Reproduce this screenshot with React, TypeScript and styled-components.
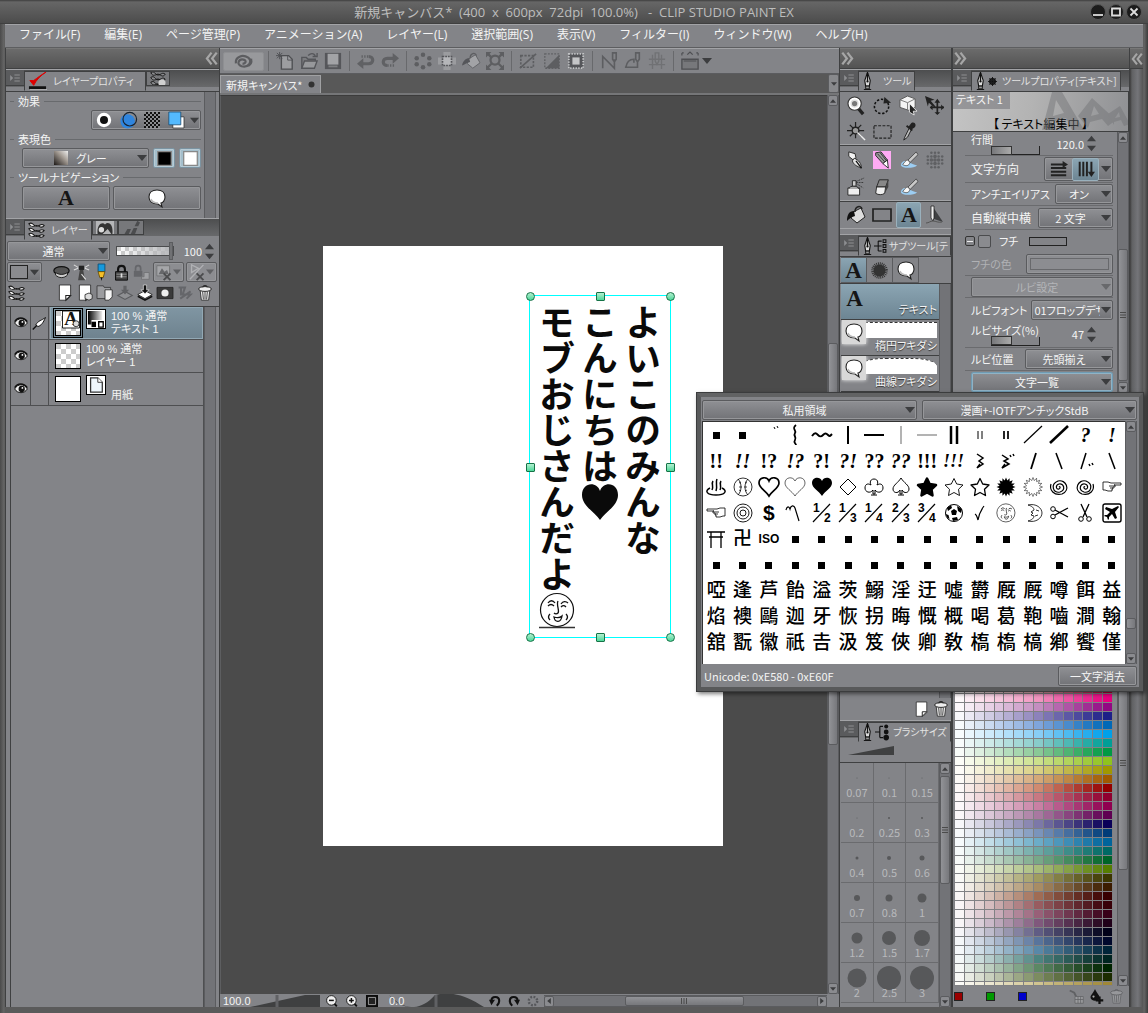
import React from 'react';
import styled, { createGlobalStyle, css } from 'styled-components';

const c = {
  panel: '#838488',
  line: '#4e4f51',
  light: '#a2a3a6',
  dark: '#4b4b4b',
  text: '#f4f4f4',
  dim: '#b8b9bc',
};
const ui = '"Noto Sans CJK JP", "Noto Sans", sans-serif';
const wide = '"Open Sans", "Noto Sans CJK JP", sans-serif';
const compact = '"Liberation Sans", "Noto Sans CJK JP", sans-serif';
const serif = '"Liberation Serif", serif';
const raised = css`
  background: linear-gradient(#8f9094, #727377);
  border: 1px solid #5a5b5e;
  border-radius: 2px;
  box-shadow: inset 0 0 0 1px #96979a;
`;

const Global = createGlobalStyle`
  * { box-sizing: border-box; }
  html, body { margin: 0; background: ${c.dark}; }
  body { font: 11px/14px ${ui}; color: ${c.text}; font-feature-settings: "palt"; overflow: hidden; }
  button, input, select { font: inherit; font-feature-settings: inherit; color: inherit; margin: 0; padding: 0; }
  button { background: none; border: 0; display: flex; align-items: center; justify-content: center; }
  svg { display: block; flex: none; overflow: visible; }
  h2 { margin: 0; font: inherit; }
`;

/* ---------- window ---------- */
const Win = styled.div`
  height: 100vh; min-height: 760px; display: flex; flex-direction: column;
  padding: 0 5px 6px; position: relative;
  background: linear-gradient(90deg, #4a4a4a, #666 4px, #5a5a5a 5px, #5a5a5a calc(100% - 5px), #666 calc(100% - 4px), #3c3c3c);
`;
const TitleBar = styled.header`
  height: 24px; margin: 0 -5px; flex: none; display: flex; align-items: center; justify-content: center;
  background: linear-gradient(#3e3e3e, #666 2px, #4c4c4c 23px, #333);
  color: #bdbdbd; font: 13px/16px ${wide}; position: relative; white-space: pre; font-feature-settings: normal;
`;
const WinButtons = styled.div`
  position: absolute; right: 6px; top: 4px; display: flex; gap: 2px;
`;
const MenuBar = styled.nav`
  height: 24px; flex: none; display: flex; align-items: center; gap: 24px; padding: 0 14px 2px;
  background: linear-gradient(#a2a3a6 1px, ${c.panel} 1px); border-bottom: 1px solid #5d5e60;
  font: 12px/16px ${wide}; font-feature-settings: normal;
  button { white-space: nowrap; }
`;
const Body = styled.div` flex: 1; min-height: 0; display: flex; `;
const Column = styled.section<{ $w: number }>`
  width: ${p => p.$w}px; flex: none; display: flex; flex-direction: column; min-height: 0;
  background: ${c.panel}; border-left: 1px solid #3f4041; border-right: 1px solid #3f4041;
`;
const Strip = styled.div<{ $end?: boolean }>`
  height: 21px; flex: none; display: flex; align-items: center; padding: 0 1px;
  justify-content: ${p => (p.$end ? 'flex-end' : 'flex-start')};
  background: linear-gradient(#6b6b6b, #535353); border-bottom: 1px solid #3f4041; border-top: 1px solid #777;
`;
const Edge = styled.aside`
  width: 13px; flex: none; display: flex; flex-direction: column;
  background: linear-gradient(90deg, #3e3e3e, #606163 2px, #747579 60%, #555);
`;

/* ---------- panels ---------- */
const Panel = styled.section<{ $grow?: boolean; $h?: number }>`
  display: flex; flex-direction: column; min-height: 0; overflow: hidden;
  flex: ${p => (p.$grow ? '1 1 0' : 'none')};
  ${p => p.$h && `height: ${p.$h}px;`}
`;
const Tabs = styled.div`
  height: 22px; flex: none; display: flex; align-items: flex-start; border-top: 1px solid ${c.light};
  background: linear-gradient(#4d4e4f, #68696b) 0 0 / 100% 17px no-repeat, ${c.panel};
`;
const TabMenu = styled.button`
  width: 18px; height: 16px; flex: none; background: #5a5b5d; border-bottom: 1px solid #3f4041;
`;
const Tab = styled.button<{ $on?: boolean; $gap?: number }>`
  height: ${p => (p.$on ? 20 : 15)}px; margin-top: 1px; padding: 0 3px; gap: ${p => p.$gap ?? 4}px; white-space: nowrap;
  justify-content: flex-start; min-width: 0; overflow: hidden; font-size: 10px;
  background: ${p => (p.$on ? c.panel : '#77787b')}; color: #e2e2e2;
  border: 1px solid #3f4041; border-bottom-color: ${p => (p.$on ? c.panel : '#3f4041')};
`;
const Split = styled.div` flex: 1; min-height: 0; display: flex; border-top: 1px solid #3f4041; padding-left: 1px; `;
const Main = styled.div<{ $pad?: string }>`
  flex: 1; min-width: 0; display: flex; flex-direction: column; overflow: hidden; padding: ${p => p.$pad || '0'};
`;
const Gap = styled.i<{ $w?: number }>` width: ${p => p.$w || 4}px; flex: none; `;
const Heading = styled.h2`
  height: 18px; flex: none; display: flex; align-items: center; gap: 4px; margin-left: -12px; white-space: nowrap;
  &::before, &::after { content: ''; height: 1px; background: ${c.line}; opacity: .5; width: 4px; }
  &::after { flex: 1; }
`;
const Row = styled.div<{ $h?: number; $gap?: number; $end?: boolean; $between?: boolean; $grow?: boolean; $pad?: string }>`
  display: flex; flex: ${p => (p.$grow ? '1' : 'none')}; align-items: center; height: ${p => p.$h || 20}px; gap: ${p => p.$gap || 0}px;
  justify-content: ${p => (p.$end ? 'flex-end' : p.$between ? 'space-between' : 'flex-start')}; padding: ${p => p.$pad || '0'};
`;
const Group = styled.div` ${raised} height: 20px; display: flex; align-items: center; `;
const Btn = styled.button<{ $w?: number; $h?: number; $blue?: boolean; $off?: boolean; $grow?: boolean }>`
  ${raised}
  width: ${p => (p.$w ? p.$w + 'px' : 'auto')}; height: ${p => p.$h || 20}px; ${p => p.$grow && 'flex: 1;'}
  ${p => p.$blue && 'background: #a4bfcc; border-color: #7b93a1; box-shadow: inset 0 0 0 1px #b8ccd6;'}
  ${p => p.$off && 'background: #8c8d91; color: #b4b5b8;'}
`;
const IconBtn = styled.button<{ $w?: number; $h?: number; $on?: boolean }>`
  width: ${p => p.$w || 20}px; height: ${p => p.$h || 20}px; flex: none;
  ${p => p.$on && `background: linear-gradient(#8ba5b3, #6d8593); border: 1px solid #9ab1bd; border-radius: 2px;`}
`;

const Drop = styled.div<{ $w?: number; $h?: number; $off?: boolean; $hot?: boolean }>`
  ${raised}
  display: grid; grid-template-columns: minmax(0, 1fr); align-items: center; height: ${p => p.$h || 20}px;
  flex: ${p => (p.$w ? 'none' : '1')}; min-width: 0;
  ${p => p.$w && `width: ${p.$w}px;`}
  ${p => p.$off && 'background: #8c8d91; color: #b4b5b8;'}
  ${p => p.$hot && 'border-color: #6f9bb3; box-shadow: inset 0 0 0 1px #8fb3c6;'}
  & > * { grid-area: 1 / 1; min-width: 0; }
  & > svg { pointer-events: none; justify-self: end; margin-right: 1px; }
  & > i { pointer-events: none; }
`;
const Select = styled.select<{ $l?: number }>`
  appearance: none; border: 0; background: none; width: 100%; height: 100%; padding: 0 12px 0 ${p => p.$l ?? 2}px;
  text-align: center; text-align-last: center; overflow: hidden; outline: 0;
`;
const Swatch = styled.i`
  width: 14px; height: 14px; margin-left: 31px; background: linear-gradient(45deg, #1c1816, #a59d95 60%, #eee);
`;

/* ---------- scrollbars ---------- */
const BarBox = styled.div<{ $x?: boolean }>`
  flex: none; display: flex; flex-direction: ${p => (p.$x ? 'row' : 'column')};
  ${p => (p.$x ? 'height: 12px; flex: 1;' : 'width: 12px;')} background: #727377; border: 0 solid #5b5c5f;
  border-width: ${p => (p.$x ? '1px 0' : '0 1px')};
`;
const BarBtn = styled.button`
  flex: none; width: 10px; height: 11px; background: #8a8b8f; border: 1px solid #5b5c5f; border-radius: 2px;
`;
const BarTrack = styled.div<{ $x?: boolean; $f: string }>`
  flex: 1; min-height: 0; display: grid; ${p => (p.$x ? `grid-template-columns: ${p.$f};` : `grid-template-rows: ${p.$f};`)}
`;
const Thumb = styled.div<{ $x?: boolean }>`
  ${p => (p.$x ? 'grid-column: 2;' : 'grid-row: 2;')} border: 1px solid #5b5c5f; border-radius: 2px;
  background: linear-gradient(${p => (p.$x ? '180deg' : '90deg')}, #929397, #77787c);
  display: flex; align-items: center; justify-content: center;
`;
const Arrow = ({ d, w = 6, color = '#3c3d3f' }: { d: 'u' | 'd' | 'l' | 'r'; w?: number; color?: string }) => {
  const p = { u: '0,8 10,8 5,2', d: '0,2 10,2 5,8', l: '8,0 8,10 2,5', r: '2,0 2,10 8,5' }[d];
  return <svg width={w} height={w} viewBox="0 0 10 10" fill={color}><polygon points={p} /></svg>;
};
const Scroll = ({ f, x, grip = true }: { f?: [number, number, number]; x?: boolean; grip?: boolean }) => (
  <BarBox $x={x}>
    {f && <BarBtn aria-label={x ? 'Left' : 'Up'}><Arrow d={x ? 'l' : 'u'} /></BarBtn>}
    {f && (
      <BarTrack $x={x} $f={f.map(n => `minmax(0, ${n}fr)`).join(' ')}>
        <Thumb $x={x}>{grip && (
          <svg width="8" height="8" viewBox="0 0 8 8" stroke="#4b4b4b">
            <path d={x ? 'M1.5 1v6M4 1v6M6.5 1v6' : 'M1 1.5h6M1 4h6M1 6.5h6'} />
          </svg>)}
        </Thumb>
      </BarTrack>
    )}
    {f && <BarBtn aria-label={x ? 'Right' : 'Down'}><Arrow d={x ? 'r' : 'd'} /></BarBtn>}
  </BarBox>
);

/* ---------- icons, all on a 20 by 20 field ---------- */
const brush = <><path d="M18 1L9 10l2 3 9-9z" fill="#c9c9c9" stroke="#333" strokeWidth=".8" /><path d="M1 16c0-4 4-6 8-4 4 2 6 3 10 4-3 3-16 4-18 0z" fill="#9ccdf2" /><path d="M9 10c-3 0-4 3-6 5 3 2 7 2 8-2z" fill="#f7f7f7" stroke="#444" strokeWidth=".8" /></>;
const stack = (col: string) => <g fill={col} stroke="#161616" strokeWidth="1.200">{[1, 7, 13].map(y => <path key={y} d={`M1 ${y + 1}c5-3 5 3 9 3s5-4 9-1c-3 5-6 0-9 0s-6 4-9-2z`} />)}</g>;
const trash = (a: string, b: string) => <><path d="M4 7l1.500 12h9L16 7z" fill={a} stroke={b} /><path d="M7 8l1 10M10 8v10M13 8l-1 10" stroke={b} /><ellipse cx="10" cy="5" rx="8" ry="3" fill={a} stroke={b} strokeWidth="1.200" /><path d="M7 3c1-3 5-3 6 0" fill="none" stroke={b} strokeWidth="1.300" /></>;
const balloon = <><path d="M10 2c5 0 8 3 8 7 0 3-2 6-4 6l1 4-4-3c-6 0-9-3-9-7s3-7 8-7z" fill="#fff" stroke="#222" strokeWidth="1.100" /><path d="M4 11c1 3 4 4 7 4" fill="none" stroke="#bbb" strokeWidth="1.500" /></>;
const pageShape = (a: string, b: string) => <><path d="M3 0h14v14l-5 5H3z" fill={a} stroke={b} /><path d="M17 13h-6v6z" fill="#fff" stroke={b} strokeWidth="1.300" /></>;
const letterA = <text x="10" y="17" textAnchor="middle" fontFamily="Liberation Serif, serif" fontWeight="700" fontSize="22" fill="#151515">A</text>;

const icons: Record<string, React.ReactNode> = {
  menu: <><path d="M2 5l5 5-5 5z" fill="#8e8f92" /><path d="M9 5h9M9 10h9M9 15h9" stroke="#8e8f92" strokeWidth="2" /></>,
  left2: <path d="M10 1L3 10l7 9M18 1l-7 9 7 9" fill="none" stroke="#a6a6a6" strokeWidth="3.500" />,
  right2: <path d="M2 1l7 9-7 9M10 1l7 9-7 9" fill="none" stroke="#a6a6a6" strokeWidth="3.500" />,
  check: <><path d="M2 9l4 5c3-6 7-10 13-14-5 3-9 6-13 9z" fill="#d00" stroke="#d00" /><path d="M1 15h18v3H1z" fill="#111" /><path d="M2 19h18" stroke="#eee" /></>,
  stack: stack('#eee'), stackDim: <>{stack('#8a8b8e')}<circle cx="15" cy="15" r="4.500" fill="#d0d0d0" /></>,
  ring: <circle cx="10" cy="10" r="7" fill="#111" stroke="#fff" strokeWidth="4" />,
  blue: <><circle cx="9" cy="11" r="8.500" fill="#2f85de" /><circle cx="11.500" cy="8.500" r="8" fill="none" stroke="#1a2430" strokeWidth="1.400" /></>,
  layerColor: <><path d="M6 6h14v14H6z" fill="#fff" stroke="#333" /><path d="M1 0h15v16H1z" fill="#54baff" stroke="#1c4c72" /></>,
  black: <path d="M2 2h16v16H2z" fill="#000" stroke="#888" strokeWidth="1.500" />,
  white: <path d="M2 2h16v16H2z" fill="#fff" stroke="#888" strokeWidth="1.500" />,
  A: letterA, balloon, brush, trash: trash('#eee', '#222'), trashDim: trash('#97989b', '#626366'),
  page: pageShape('#fff', '#222'),
  pageCube: <>{pageShape('#fff', '#222')}<path d="M10 12l5-2 4 2v5l-4 2-5-2z" fill="#ddd" stroke="#222" /></>,
  folder: <><path d="M0 1h8l1 2h8v14H0z" fill="#9b9c9f" stroke="#333" /><path d="M10 6h9v9l-4 4h-5z" fill="#f4f4f4" stroke="#222" /></>,
  sheetsDim: <><path d="M10 8l9 5-9 5-9-5z" fill="#8f9093" stroke="#5b5c5f" strokeWidth="1.500" /><path d="M8 1h4v5h3l-5 6-5-6h3z" fill="#606164" /></>,
  sheets: <><path d="M10 7l9 5-9 5-9-5z" fill="#fff" stroke="#111" /><path d="M1 14l9 5 9-5" fill="none" stroke="#111" strokeWidth="2" /><path d="M8 0h4v6h3l-5 5-5-5h3z" fill="#111" stroke="#fff" strokeWidth=".7" /></>,
  mask: <><path d="M0 3h20v14H0z" fill="#3a3a3a" stroke="#222" /><circle cx="10" cy="10" r="4.500" fill="#eee" /></>,
  apply: <path d="M5 2v11M2 3h8l-3 9h10l-5 5M4 17l13-9" fill="none" stroke="#65666a" strokeWidth="2.500" />,
  clip: <><ellipse cx="10" cy="8" rx="9" ry="5" fill="#555" stroke="#111" strokeWidth="1.500" /><path d="M3 10c4 3 10 3 14 0v3c-4 4-10 4-14 0z" fill="#ccc" stroke="#111" /></>,
  tower: <><path d="M8 7h4l2 12H6z" fill="#444" /><path d="M7 2h6v5H7z" fill="#222" /><path d="M1 1l5 3M19 1l-5 3M1 7l5-2M19 7l-5-2M10 12l5 6" stroke="#ddd" strokeWidth="1.300" /></>,
  crayon: <><path d="M6 0h8v9H6z" fill="#1599dc" stroke="#0b4c74" /><path d="M6 9h8l-2 7h-4z" fill="#f5c02a" stroke="#684d00" /><path d="M9 16h2l-1 4z" fill="#111" /></>,
  lock: <><path d="M6 9V6c0-5 8-5 8 0v3" fill="none" stroke="#111" strokeWidth="2.500" /><path d="M3 9h14v10H3z" fill="#444" stroke="#000" /><path d="M4 12h12M4 15h12" stroke="#999" /><path d="M10 11v5" stroke="#ddd" strokeWidth="2" /></>,
  lockDim: <><path d="M3 8V5c0-4 6-4 6 0v3" fill="none" stroke="#65666a" strokeWidth="2" /><path d="M1 8h10v7H1z" fill="#65666a" /><path d="M13 10h6v8h-9v-3h3z" fill="#a0a1a4" stroke="#707174" /></>,
  maskX: <><path d="M1 2h15v12H1z" fill="#a5a6a9" stroke="#707174" /><path d="M3 12l4-7 3 4 3-2 2 5z" fill="#66676a" /><path d="M9 11l8 8M17 11l-8 8" stroke="#4b4c4e" strokeWidth="2.200" /></>,
  rulerX: <><path d="M3 10V1l8 4zM1 18L17 1" fill="none" stroke="#b0b1b4" strokeWidth="1.600" /><path d="M9 11l8 8M17 11l-8 8" stroke="#4b4c4e" strokeWidth="2.200" /></>,
  eye: <><path d="M1 10c4-8 14-8 18 0-4 7-14 7-18 0z" fill="#eee" stroke="#111" strokeWidth="1.400" /><circle cx="11" cy="10" r="4.500" fill="#111" /><circle cx="12" cy="8.500" r="1.300" fill="#fff" /><path d="M1 8c4-7 13-7 18 0" fill="none" stroke="#111" strokeWidth="2" /></>,
  pen: <><path d="M18 2c-3 7-6 11-10 12l-3-2C8 6 13 6 18 2z" fill="#fff" stroke="#111" strokeWidth="1.300" /><path d="M6 13l-5 5" stroke="#111" strokeWidth="2" /></>,
  zoomTool: <><path d="M11 12l6 7" stroke="#222" strokeWidth="3.500" /><circle cx="8" cy="8" r="7" fill="#fff" stroke="#333" strokeWidth="1.200" /><circle cx="8" cy="8" r="3.500" fill="#777" stroke="#ddd" strokeWidth="1.500" /></>,
  rotate: <><circle cx="9" cy="11" r="7.500" fill="none" stroke="#111" strokeWidth="1.600" strokeDasharray="2.500 1.800" /><path d="M12 1l7 6-8 1z" fill="#222" /></>,
  cube: <><path d="M1 4l8-4 8 3v9l-7 3-9-3z" fill="#f4f4f4" stroke="#555" /><path d="M1 4l8 3 8-4M9 7v8" stroke="#777" /><path d="M11 8l8 8h-4l1 4-5-3z" fill="#222" stroke="#fff" strokeWidth=".8" /></>,
  move: <><path d="M0 0l10 4-4 1 5 6-1 1-6-5-1 4z" fill="#222" /><path d="M13 5v14M6 12h14" stroke="#222" strokeWidth="1.800" /><path d="M13 3l3 4h-6zM13 20l3-3h-6zM5 12l3-3v6zM20 12l-3-3v6z" fill="#222" /></>,
  wand: <><path d="M9 0v17M0 9h18M3 3l12 12M15 3L3 15" stroke="#222" strokeWidth="1.300" /><circle cx="9" cy="9" r="3.500" fill="#999" stroke="#222" strokeWidth="1.400" /><path d="M11 11l8 8" stroke="#eee" strokeWidth="1.500" /></>,
  marquee: <path d="M1 4h18v13H1z" fill="none" stroke="#222" strokeWidth="1.200" strokeDasharray="3 1.500" />,
  dropper: <><path d="M13 1c4-2 6 3 3 5l-3 2-3-3z" fill="#222" /><path d="M11 6L6 16l-1 3 4-3 4-8" fill="#bbb" stroke="#222" /><path d="M8 4l6 5" stroke="#222" strokeWidth="2" /></>,
  penTool: <><path d="M2 1l7 2 1 5-3 2-5-4z" fill="#f2f2f2" stroke="#222" /><path d="M8 8c5 2 8 6 8 11-5-2-9-4-10-8z" fill="#e4e4e4" stroke="#222" /><path d="M10 11l6 8" stroke="#111" strokeWidth="1.500" /></>,
  pencil: <><path d="M0 0h20v20H0z" fill="#ffabf4" /><path d="M3 2l6-1 7 9-5 4-8-9z" fill="#999" stroke="#222" /><path d="M11 14l5-4 1 9z" fill="#fff" stroke="#222" /><path d="M5 3l8 9M8 2l7 9" stroke="#333" /></>,
  spray: <><path d="M1 11h13v8H1z" fill="#eee" stroke="#222" /><path d="M2 12c1-4 10-4 11 0" fill="#aaa" stroke="#222" /><path d="M6 3h4v6H6z" fill="#ccc" stroke="#222" /><path d="M10 4l9-4M10 5l9 0M10 6l8 5" stroke="#333" strokeDasharray="2 1" /></>,
  deco: <g fill="#5f6063">{[2, 6, 10, 14, 18].map((x, i) => [2, 6, 10, 14, 18].map((y, j) => (Math.abs(i - 2) + Math.abs(j - 2) < 4 ? <circle key={x + '-' + y} cx={x} cy={y} r={Math.abs(i - 2) + Math.abs(j - 2) < 2 ? 2 : 1.400} /> : null)))}</g>,
  eraser: <><path d="M7 2h10l-3 8H4z" fill="#888" stroke="#222" /><path d="M4 10h10l-1 7c-3 2-7 2-10 0z" fill="#eee" stroke="#222" /><path d="M14 10l3-8v8l-4 7z" fill="#444" /></>,
  bucket: <><path d="M7 7l8-4 4 9-8 6-6-5z" fill="#ddd" stroke="#222" /><path d="M9 7c0-6 6-7 7-3" fill="none" stroke="#222" strokeWidth="1.500" /><path d="M8 6c-5 0-7 4-7 10 2-2 4-4 8-5z" fill="#111" /></>,
  rect: <path d="M1 4h18v12H1z" fill="none" stroke="#222" strokeWidth="1.700" />,
  ruler: <><path d="M8 2l10 15-9-3z" fill="#3f4042" /><path d="M6 1h3v12l-1 3-2-3z" fill="#eee" stroke="#222" strokeWidth=".8" /><path d="M1 18c3 0 4-2 7-2s5 2 9 1" fill="none" stroke="#555" /></>,
  burst: <><circle cx="10" cy="10" r="7" fill="#333" /><circle cx="10" cy="10" r="8" fill="none" stroke="#333" strokeWidth="3.500" strokeDasharray="1.100 1" /></>,
  gear: <><circle cx="10" cy="10" r="6" fill="none" stroke="#111" strokeWidth="3.500" /><path d="M10 0v20M0 10h20M3 3l14 14M17 3L3 17" stroke="#111" strokeWidth="2" /></>,
  tree: <><path d="M0 10h6M6 3v14M6 3h5M6 17h5M6 10h5" stroke="#111" fill="none" strokeWidth="1.500" /><path d="M13 1h4v4h-4zM13 8h4v4h-4zM13 15h4v4h-4z" fill="none" stroke="#111" strokeWidth="1.500" /></>,
  dotTree: <><path d="M0 10h6M6 3v14M6 3h4M6 17h4" stroke="#111" fill="none" strokeWidth="1.500" /><circle cx="14" cy="3" r="2.500" fill="#111" /><circle cx="14" cy="10" r="3" fill="#111" /><circle cx="14" cy="17" r="3.500" fill="#111" /></>,
  swirl: <path d="M9 12c3 1 5-3 1-4-5-1-8 5-2 7 7 2 12-5 7-9C9 2 1 5 2 12M13 15c4-1 6-4 5-8" fill="none" stroke="#5c5d60" strokeWidth="2.300" />,
  tNew: <><path d="M6 4h8l4 4v11H6z" fill="#9c9da0" stroke="#4e4f52" strokeWidth="1.500" /><path d="M13 4v5h5" fill="none" stroke="#4e4f52" /><path d="M4 0v8M0 4h8M1 1l6 6M7 1L1 7" stroke="#4e4f52" /></>,
  tOpen: <><path d="M2 18V6h5l2 2h8v3" fill="#7a7b7e" stroke="#55565a" strokeWidth="1.500" /><path d="M2 18l3-8h14l-3 8z" fill="#97989b" stroke="#55565a" strokeWidth="1.500" /><path d="M9 4c3-3 6-3 8 0M14 5h5V1" fill="none" stroke="#55565a" strokeWidth="1.500" /></>,
  tSave: <><path d="M1 1h18v18H1z" fill="#55565a" /><path d="M4 2h12v12H4z" fill="#a2a3a6" /><path d="M5 16h10" stroke="#7d7e81" strokeWidth="2" /></>,
  tUndo: <><path d="M5 13h8c6 0 6-8 0-8" fill="none" stroke="#606164" strokeWidth="3.500" /><path d="M5 5h8" stroke="#606164" strokeWidth="3" strokeDasharray="1.500 1.500" /><path d="M0 13l7-6v12z" fill="#606164" /></>,
  tRedo: <><path d="M15 7H7c-6 0-6 8 0 8" fill="none" stroke="#606164" strokeWidth="3.500" /><path d="M7 15h8" stroke="#606164" strokeWidth="3" strokeDasharray="1.500 1.500" /><path d="M20 7l-7-6v12z" fill="#606164" /></>,
  tClear: <g fill="#5d5e61"><circle cx="10" cy="3" r="2.500" /><circle cx="10" cy="17" r="2.500" /><circle cx="3" cy="7" r="2.500" /><circle cx="17" cy="7" r="2.500" /><circle cx="3" cy="13.500" r="2.500" /><circle cx="17" cy="13.500" r="2.500" /></g>,
  tClearOut: <><path d="M6 0h8v6h6v8h-6v6H6v-6H0V6h6z" fill="#9b9c9f" /><path d="M5 5h10v10H5z" fill="#b5b6b9" stroke="#55565a" strokeWidth="1.800" strokeDasharray="2 1" /></>,
  tFill: <><path d="M7 8l8-5 5 9-8 6-6-5z" fill="#a2a3a6" stroke="#606164" /><path d="M9 7c0-6 6-7 7-3" fill="none" stroke="#5d5e61" strokeWidth="1.500" /><path d="M8 7c-4 0-7 3-8 8 3-1 5-3 9-4z" fill="#55565a" /></>,
  tScale: <><circle cx="10" cy="9" r="5" fill="none" stroke="#5d5e61" strokeWidth="2.500" /><path d="M1 1l5 5M19 1l-5 5M1 18l5-5M19 18l-5-5" stroke="#5d5e61" strokeWidth="2.500" /><path d="M0 6V0h6zM20 6V0h-6zM0 14v6h6zM20 14v6h-6z" fill="#5d5e61" /></>,
  tDesel: <><path d="M2 4h14v13H2z" fill="none" stroke="#5d5e61" strokeWidth="1.800" strokeDasharray="2.500 1.500" /><path d="M1 18L19 2" stroke="#5d5e61" strokeWidth="1.800" /></>,
  tInv: <><path d="M2 2h16v16H2z" fill="none" stroke="#606164" strokeWidth="1.500" strokeDasharray="2 1.500" /><path d="M18 3v15H3z" fill="#5d5e61" /></>,
  tBorder: <><path d="M2 2h16v16H2z" fill="#55565a" stroke="#c4c5c7" strokeWidth="2" strokeDasharray="1.500 1.500" /><path d="M6 6h8v8H6z" fill="#c4c5c7" /></>,
  tS1: <path d="M3 18V5l13 13V8M14 8V1h4v7l-2 3z" fill="none" stroke="#5d5e61" strokeWidth="1.800" />,
  tS2: <path d="M2 17c1-6 4-9 9-9v4M1 17h14V11M13 8V1h4v7l-2 3z" fill="none" stroke="#5d5e61" strokeWidth="1.800" />,
  tS3: <path d="M5 3v16M15 3v16M1 8h18M1 14h18M8 1h4v9l-2 4-2-4z" fill="none" stroke="#707174" strokeWidth="1.500" />,
  tAssist: <><path d="M1 8h18v11H1z" fill="#77787b" stroke="#4e4f52" strokeWidth="1.500" /><path d="M3 10h14M1 1h2M17 1h2M7 3l3-3 3 3M1 1v3M19 1v3" stroke="#4e4f52" strokeWidth="1.300" fill="none" /></>,
  zoomOut: <><path d="M13 13l5 6" stroke="#111" strokeWidth="3" /><circle cx="9" cy="9" r="8" fill="#eee" stroke="#111" strokeWidth="1.500" /><path d="M5 9h8" stroke="#111" strokeWidth="2.500" /></>,
  zoomIn: <><path d="M13 13l5 6" stroke="#111" strokeWidth="3" /><circle cx="9" cy="9" r="8" fill="#eee" stroke="#111" strokeWidth="1.500" /><path d="M5 9h8M9 5v8" stroke="#111" strokeWidth="2.500" /></>,
  fit: <><path d="M0 0h20v20H0z" fill="#0b0b0b" /><path d="M4 4h12v12H4z" fill="#222" stroke="#aaa" strokeWidth="1.500" /></>,
  rotL: <><path d="M4 10c0-9 13-9 13 0 0 4-2 6-4 8" fill="none" stroke="#111" strokeWidth="3.500" /><path d="M0 8h10l-6 9z" fill="#111" /></>,
  rotR: <><path d="M16 10c0-9-13-9-13 0 0 4 2 6 4 8" fill="none" stroke="#111" strokeWidth="3.500" /><path d="M20 8H10l6 9z" fill="#111" /></>,
  rotReset: <circle cx="10" cy="10" r="7" fill="none" stroke="#55565a" strokeWidth="4" strokeDasharray="3 2.500" />,
  dropAdd: <><path d="M8 0c2 5 6 8 6 11 0 6-12 6-12 0 0-3 4-6 6-11z" fill="#111" /><path d="M14 10v10M9 15h10" stroke="#111" strokeWidth="3" /><circle cx="6" cy="10" r="1.500" fill="#aaa" /></>,
  swatchAdd: <><path d="M1 2l6 3 4 8" fill="none" stroke="#606164" strokeWidth="2.500" /><path d="M8 10h11v9H8zM8 14h11M12 10v9M15.500 10v9" fill="#9b9c9f" stroke="#606164" /></>,
  hLines: <><path d="M1 5h15M1 9h17M1 13h17M1 17h17" stroke="#222" strokeWidth="2.200" /><path d="M14 1l6 4-6 4z" fill="#222" /></>,
  vLines: <><path d="M3 2v16M7 2v16M11 2v16M16 2v14" stroke="#222" strokeWidth="2.200" /><path d="M12 13h8l-4 6z" fill="#222" /></>,
  clap: <path d="M2 18l4-7 4 0-3 7zM9 18l4-8 4 0-3 8zM14 8l3-6 3 2-2 4z" fill="#4b4c4e" />,
  history: <><path d="M0 0h20v20H0z" fill="#b5b6b8" /><path d="M2 18C0 8 6 2 10 6c4-4 10 0 8 12l-5-7-6 6z" fill="#333" /><circle cx="6" cy="12" r="3" fill="#ddd" /></>,
  grayLayer: <><path d="M0 0h20v20H0z" fill="#fff" /><path d="M1 1h16v10H5v5H1z" fill="url(#gl)" /><path d="M5 13h5v6H5z" fill="#000" /><path d="M13 13h5v6h-5z" fill="#fff" stroke="#000" strokeWidth="1.500" /><defs><linearGradient id="gl"><stop stopColor="#000" /><stop offset="1" stopColor="#eee" /></linearGradient></defs></>,
  paper: <><path d="M0 0h20v20H0z" fill="#fff" /><path d="M4 2h8l5 5v11H4z" fill="#eef6fc" stroke="#333" strokeWidth="1.400" /><path d="M12 2v5h5" fill="#fff" stroke="#333" /></>,
};
const Icon = ({ n, s = 16 }: { n: string; s?: number }) => <svg width={s} height={s} viewBox="0 0 20 20" aria-hidden="true" fill="none">{icons[n]}</svg>;
const Nib = () => (
  <svg width="11" height="19" viewBox="4 0 12 20" aria-hidden="true">
    <path d="M10 0l3 9-1 6H8L7 9z" fill="#ddd" stroke="#111" strokeWidth="1.200" /><path d="M10 1v9" stroke="#111" strokeWidth="1.500" />
    <circle cx="10" cy="10" r="1.200" fill="#111" /><path d="M8 15h4v3H8z" fill="#999" stroke="#111" /><path d="M6 19h8" stroke="#111" strokeWidth="1.500" />
  </svg>
);

/* ---------- layer property ---------- */
const Checker = styled.i`
  width: 16px; height: 16px; background: repeating-conic-gradient(#111 0 25%, #8b8c8f 0 50%) 0 0 / 4px 4px;
`;
const LayerProperty = () => (
  <Panel $h={149}>
    <Tabs>
      <TabMenu aria-label="Menu"><Icon n="menu" s={12} /></TabMenu>
      <Tab $on $gap={6}><Icon n="check" s={19} />レイヤープロパティ<Gap $w={2} /></Tab>
      <Tab><Icon n="stackDim" s={16} /></Tab>
    </Tabs>
    <Split>
      <Main $pad="0 3px 0 15px">
        <Heading>効果</Heading>
        <Row $end>
          <Group>
            <IconBtn $w={24} aria-label="境界効果"><Icon n="ring" s={16} /></IconBtn>
            <IconBtn $w={24} aria-label="線抽出"><Icon n="blue" s={17} /></IconBtn>
            <IconBtn $w={24} aria-label="トーン"><Checker /></IconBtn>
            <IconBtn $w={24} aria-label="レイヤーカラー"><Icon n="layerColor" s={16} /></IconBtn>
            <IconBtn $w={12} aria-label="More"><Arrow d="d" w={9} /></IconBtn>
          </Group>
        </Row>
        <Heading>表現色</Heading>
        <Row $gap={4}>
          <Drop><Select $l={24} aria-label="表現色" defaultValue="g"><option value="g">グレー</option></Select><Swatch /><Arrow d="d" w={10} /></Drop>
          <Btn $w={22} $blue aria-label="黒"><Icon n="black" s={17} /></Btn>
          <Btn $w={22} $blue aria-label="白"><Icon n="white" s={17} /></Btn>
        </Row>
        <Heading>ツールナビゲーション</Heading>
        <Row $h={24} $gap={3}>
          <Btn $grow $h={24} aria-label="文字"><Icon n="A" s={20} /></Btn>
          <Btn $grow $h={24} aria-label="フキダシ"><Icon n="balloon" s={20} /></Btn>
        </Row>
      </Main>
      <Scroll /><Gap $w={3} />
    </Split>
  </Panel>
);

/* ---------- layers ---------- */
const Opacity = styled.input`
  appearance: none; width: 58px; height: 10px; border: 1px solid #4b4c4e;
  background: linear-gradient(90deg, transparent, #b5b6b9), repeating-conic-gradient(#fff 0 25%, #ccc 0 50%) 0 0 / 8px 8px;
  &::-webkit-slider-thumb { appearance: none; width: 4px; height: 18px; background: #707174; border: 1px solid #5b5c5f; }
`;
const Num = styled.input<{ $w: number }>`
  width: ${p => p.$w}px; border: 0; background: none; text-align: right; outline: 0;
`;
const Spin = styled.span` display: flex; flex-direction: column; gap: 1px; margin: 0 3px; `;
const SpinBox = () => <Spin><Arrow d="u" w={9} /><Arrow d="d" w={9} /></Spin>;
const ColorBox = styled.i` width: 18px; height: 14px; border: 1px solid #222; background: #8a8b8f; margin-left: 2px; `;
const LayerList = styled.ul`
  margin: 0 0 0 3px; padding: 0; list-style: none; flex: 1; border-left: 1px solid #3f4041; border-right: 1px solid ${c.line};
`;
const LayerRow = styled.li<{ $on?: boolean }>`
  height: 33px; display: grid; grid-template-columns: 20px 18px 1fr; border-bottom: 1px solid ${c.line};
  & > * { border-right: 1px solid ${c.line}; display: flex; align-items: center; justify-content: center; }
  & > :last-child {
    border: 0; justify-content: flex-start; gap: 5px; padding-left: 5px; margin-left: 1px; text-align: left;
    ${p => p.$on && 'background: linear-gradient(#8096a3, #6e828e); outline: 1px solid #92a8b4; outline-offset: -1px;'}
  }
`;
const Thumbnail = styled.span<{ $plain?: boolean; $on?: boolean }>`
  width: 26px; height: 26px; flex: none; border: 1px solid #000; display: flex; justify-content: flex-end; align-items: flex-start;
  ${p => p.$on && 'outline: 1px solid #000; outline-offset: 1px;'}
  background: ${p => (p.$plain ? '#fff' : 'repeating-conic-gradient(#fff 0 25%, #ccc 0 50%) 0 0 / 10px 10px')};
`;
const Mini = styled.span` align-self: flex-start; border: 1px solid #000; margin-top: 2px; background: #fff; `;
const Name = styled.span<{ $low?: boolean }>` font-family: ${compact}; line-height: 13px; white-space: pre-line; ${p => p.$low && 'padding-top: 12px;'} `;
const Layers = () => (
  <Panel $grow>
    <Tabs>
      <TabMenu aria-label="Menu"><Icon n="menu" s={12} /></TabMenu>
      <Tab $on $gap={6}><Icon n="stack" s={17} />レイヤー</Tab>
      <Tab><Icon n="history" s={18} /></Tab>
      <Tab><Icon n="clap" s={18} /></Tab>
    </Tabs>
    <Row $h={22} $gap={6} $pad="0 0 0 1px">
      <Drop $w={103}><Select aria-label="合成モード" defaultValue="n"><option value="n">通常</option></Select><Arrow d="d" w={10} /></Drop>
      <Opacity type="range" aria-label="不透明度" defaultValue={100} />
      <Row><Num $w={22} aria-label="不透明度の値" defaultValue="100" /><SpinBox /></Row>
    </Row>
    <Row $h={20} $gap={2} $pad="0 0 0 1px">
      <Group><ColorBox /><IconBtn $w={13} aria-label="パレットカラー"><Arrow d="d" w={9} /></IconBtn></Group>
      <Row $pad="0 0 0 7px">
        {['clip', 'tower', 'crayon', 'lock', 'lockDim'].map(n => <IconBtn key={n} aria-label={n}><Icon n={n} s={17} /></IconBtn>)}
      </Row>
      <Btn $w={31} $off aria-label="マスク"><Icon n="maskX" s={17} /><Arrow d="d" w={8} color="#606164" /></Btn>
      <Btn $w={31} $off aria-label="定規"><Icon n="rulerX" s={17} /><Arrow d="d" w={8} color="#606164" /></Btn>
    </Row>
    <Row $h={24} $pad="0 4px 2px 0">
      <IconBtn aria-label="stack"><Icon n="stack" s={17} /></IconBtn>
      <Row $end $grow>
        {['page', 'pageCube', 'folder', 'sheetsDim', 'sheets', 'mask', 'apply', 'trash'].map(n => <IconBtn key={n} aria-label={n}><Icon n={n} s={16} /></IconBtn>)}
      </Row>
    </Row>
    <Split>
      <LayerList>
        <LayerRow $on>
          <span><Icon n="eye" s={14} /></span><span><Icon n="pen" s={15} /></span>
          <button>
            <Thumbnail $on><svg width="18" height="17" viewBox="0 0 20 20"><path d="M0 0h20v20H0z" fill="#fff" stroke="#000" />{letterA}<circle cx="16" cy="15" r="3.500" fill="#ddd" stroke="#222" /></svg></Thumbnail>
            <Mini><Icon n="grayLayer" s={18} /></Mini>
            <Name>{'100 %  通常\nテキスト 1'}</Name>
          </button>
        </LayerRow>
        <LayerRow>
          <span><Icon n="eye" s={14} /></span><span />
          <button><Thumbnail /><Name>{'100 %  通常\nレイヤー 1'}</Name></button>
        </LayerRow>
        <LayerRow>
          <span><Icon n="eye" s={14} /></span><span />
          <button><Thumbnail $plain /><Mini><Icon n="paper" s={18} /></Mini><Name $low>用紙</Name></button>
        </LayerRow>
      </LayerList>
      <Scroll /><Gap $w={3} />
    </Split>
  </Panel>
);

/* ---------- canvas ---------- */
const Center = styled.main` flex: 1; min-width: 0; display: flex; flex-direction: column; background: ${c.panel}; `;
const Toolbar = styled.div`
  height: 26px; flex: none; display: flex; align-items: center; padding-left: 3px; border-top: 1px solid ${c.light}; border-bottom: 1px solid #5b5c5f;
`;
const Sep = styled.i` width: 1px; height: 20px; margin: 0 4px; background: #68696c; `;
const Spiral = styled.button` width: 41px; height: 19px; background: #98999c; border: 1px solid #8e8f92; border-radius: 2px; `;
const DocTabs = styled.div`
  height: 21px; flex: none; display: flex; justify-content: space-between; background: #585858; border-bottom: 2px solid #757678;
`;
const DocTab = styled.button`
  margin-top: 1px; padding: 0 5px; gap: 6px; background: ${c.panel}; border: 1px solid #a0a1a3; border-bottom: 0; white-space: nowrap;
`;
const DocMenu = styled.button` width: 11px; background: #88898c; border: 1px solid #5b5c5f; border-radius: 2px; `;
const Stage = styled.div` flex: 1; min-height: 0; align-self: stretch; display: flex; `;
const Desk = styled.div`
  flex: 1; min-width: 0; display: flex; align-items: center; justify-content: center; background: ${c.dark};
  border-left: 1px solid #5d5e60; border-top: 1px solid #3c3c3c; padding: 2px 2px 0 0;
`;
const Paper = styled.div` width: 400px; height: 600px; flex: none; background: #fff; position: relative; `;
const TextFrame = styled.div`
  position: absolute; left: 206px; top: 49px; width: 142px; height: 343px; border: 1px solid #0ff; padding: 8px 6px;
  writing-mode: vertical-rl; text-orientation: upright; font: 700 36px/43px ${ui}; font-feature-settings: normal; color: #0a0a0a;
  p { margin: 0; width: 43px; display: flex; align-items: center; }
`;
const Handle = styled.i<{ $x: number; $y: number }>`
  position: absolute; left: calc(${p => p.$x}% - 4px); top: calc(${p => p.$y}% - 4px); width: 9px; height: 9px;
  border: 1px solid #157347; background: linear-gradient(#b3f0d0, #4fd79a);
  border-radius: ${p => (p.$x !== 50 && p.$y !== 50 ? '50%' : '1px')};
`;
const Status = styled.footer` height: 13px; flex: none; display: flex; align-items: center; background: ${c.panel}; overflow: hidden; `;
const Ramp = styled.div<{ $w: number }>`
  width: ${p => p.$w}px; height: 12px; flex: none; display: grid; align-items: center;
  & > * { grid-area: 1 / 1; }
  & > input { justify-self: start; padding-left: 3px; text-align: left; height: 12px; font: 11px/12px ${compact}; }
`;
const Tools = ({ list }: { list: string[] }) => <>{list.map(n => <IconBtn key={n} $w={24} aria-label={n}><Icon n={n} s={18} /></IconBtn>)}</>;
const faceArt = (
  <><circle cx="18" cy="18" r="16.500" fill="#fff" stroke="#111" strokeWidth="1.200" /><path d="M9 11c2-3 5-3 7 0M9 14c2-2 4-2 6 0M22 12c2-3 5-3 7-1M22 15c2-2 3-2 5 0M19 9c-2 4 2 10 0 12-1 1-3 1-4 0M11 22c-2 2-2 4 0 6M27 22c2 2 2 4 0 6M15 25c3 1 6 1 8-1-1 7-7 7-8 1z" fill="none" stroke="#111" strokeWidth="1.300" /></>
);
const CanvasArea = () => (
  <Center>
    <Toolbar>
      <Spiral aria-label="CLIP STUDIO"><Icon n="swirl" s={19} /></Spiral><Sep />
      <Tools list={['tNew', 'tOpen', 'tSave']} /><Sep />
      <Tools list={['tUndo', 'tRedo']} /><Sep />
      <Tools list={['tClear', 'tClearOut', 'tFill', 'tScale']} /><Sep />
      <Tools list={['tDesel', 'tInv', 'tBorder']} /><Sep />
      <Tools list={['tS1', 'tS2', 'tS3']} /><Sep />
      <Tools list={['tAssist']} /><Arrow d="d" w={10} />
    </Toolbar>
    <DocTabs>
      <DocTab>新規キャンバス*<svg width="7" height="7"><circle cx="3.500" cy="3.500" r="3" fill="#333" /></svg></DocTab>
      <DocMenu aria-label="List"><Arrow d="d" /></DocMenu>
    </DocTabs>
    <Stage>
      <Desk>
        <Paper>
          <TextFrame>
            <p>よいこのみんな</p>
            <p>こんにちは<svg width="36" height="36" viewBox="0 0 36 36" role="img" aria-label="♥"><path d="M18 36C13 28 0 22 0 11 0-2 15-3 18 7 21-3 36-2 36 11c0 11-13 17-18 25z" fill="#0a0a0a" /></svg></p>
            <p>モブおじさんだよ<svg width="36" height="36" viewBox="0 0 36 36">{faceArt}<path d="M0 35.500h36" stroke="#333" strokeWidth="1.500" /></svg></p>
            {[[0, 0], [50, 0], [100, 0], [0, 50], [100, 50], [0, 100], [50, 100], [100, 100]].map(([x, y]) => <Handle key={x + '-' + y} $x={x} $y={y} />)}
          </TextFrame>
        </Paper>
      </Desk>
      <Scroll f={[237, 401, 238]} grip={false} />
    </Stage>
    <Status>
      <Ramp $w={100}>
        <svg width="100" height="12"><path d="M30 12h70V0H85z" fill="#3f4041" /><path d="M57 0v12" stroke="#606164" strokeWidth="3" /></svg>
        <Num $w={44} aria-label="表示倍率" defaultValue="100.0" />
      </Ramp>
      <Row $gap={8} $h={12} $pad="0 8px 0 6px">
        <Icon n="zoomOut" s={12} /><Icon n="zoomIn" s={12} /><Icon n="fit" s={12} />
      </Row>
      <Ramp $w={98}>
        <svg width="98" height="12"><path d="M3 0c14 14 30 18 46 0 16-4 30 0 49 12H22C14 10 8 6 3 0z" fill="#3f4041" /><path d="M50 0v12" stroke="#606164" strokeWidth="3" /></svg>
        <Num $w={40} aria-label="回転角度" defaultValue="0.0" />
      </Ramp>
      <Row $gap={7} $h={12} $pad="0 5px">
        <Icon n="rotL" s={12} /><Icon n="rotR" s={12} /><Icon n="rotReset" s={12} />
      </Row>
      <Scroll x f={[70, 119, 72]} /><Gap $w={12} />
    </Status>
  </Center>
);

/* ---------- tool palette ---------- */
const ToolGrid = styled.div`
  display: grid; grid-template-columns: repeat(4, 1fr); justify-items: center; border-top: 1px solid #3f4041; border-bottom: 1px solid ${c.light};
  flex: none; padding: 0 3px;
`;
const SubTabs = styled.div`
  display: flex; flex: none; border-top: 1px solid #3f4041; height: 27px; padding-left: 1px;
  & > button { border: 1px solid #5b5c5f; border-left-width: 0; border-radius: 0; }
`;
const SubItem = styled.button<{ $on?: boolean }>`
  height: 36px; flex: none; width: 100%; padding: 0 2px 1px 1px; border-bottom: 1px solid #3f4041; display: grid;
  grid-template-columns: minmax(0, 1fr); justify-content: stretch; align-items: start; overflow: hidden;
  background: ${p => (p.$on ? 'linear-gradient(#8ba5b3, #6d8593)' : c.panel)};
  & > * { grid-area: 1 / 1; }
  & > svg { margin: 4px 0 0 2px; }
  & > span { align-self: end; justify-self: end; line-height: 17px; text-shadow: 0 1px 1px #333; }
`;
const Glow = styled.i<{ $arc?: boolean }>`
  height: 16px; margin-left: 18px; background: #fff; margin-top: 2px;
  border-radius: ${p => (p.$arc ? '50% 50% 0 0 / 12px' : '0')}; border-top: 1px dashed #333;
`;
const Halo = styled.i` width: 24px; height: 24px; background: #d8d8d8; box-shadow: 0 0 4px #fff; display: flex; align-items: center; justify-content: center; `;
const ToolColumn = () => (
  <Column $w={113}>
    <Strip><Icon n="right2" s={13} /></Strip>
    <Panel $h={165}>
      <Tabs><TabMenu aria-label="Menu"><Icon n="menu" s={12} /></TabMenu><Tab $on $gap={10}><Nib />ツール</Tab></Tabs>
      <ToolGrid>{['zoomTool', 'rotate', 'cube', 'move', 'wand', 'marquee', 'dropper'].map(n => <IconBtn key={n} $w={26} $h={26} aria-label={n}><Icon n={n} s={19} /></IconBtn>)}</ToolGrid>
      <ToolGrid>{['penTool', 'pencil', 'brush', 'deco', 'spray', 'eraser'].map(n => <IconBtn key={n} $w={26} $h={27} aria-label={n}><Icon n={n} s={18} /></IconBtn>)}<IconBtn $w={26} $h={27} aria-label="blend"><Icon n="brush" s={18} /></IconBtn></ToolGrid>
      <ToolGrid>{['bucket', 'rect', 'A', 'ruler'].map(n => <IconBtn key={n} $w={25} $h={26} $on={n === 'A'} aria-label={n}><Icon n={n} s={20} /></IconBtn>)}</ToolGrid>
    </Panel>
    <Panel $grow>
      <Tabs><TabMenu aria-label="Menu"><Icon n="menu" s={12} /></TabMenu><Tab $on $gap={1}><Nib /><Icon n="tree" s={14} />サブツール[テ</Tab></Tabs>
      <SubTabs>
        <IconBtn $w={26} $h={26} $on aria-label="テキスト"><Icon n="A" s={21} /></IconBtn>
        <IconBtn $w={26} $h={26} aria-label="フラッシュ"><Icon n="burst" s={17} /></IconBtn>
        <IconBtn $w={26} $h={26} aria-label="フキダシ"><Icon n="balloon" s={20} /></IconBtn>
      </SubTabs>
      <Split>
        <Main>
          <SubItem $on><Icon n="A" s={21} /><span>テキスト</span></SubItem>
          <SubItem><Glow /><Halo><Icon n="balloon" s={20} /></Halo><span>楕円フキダシ</span></SubItem>
          <SubItem><Glow $arc /><Halo><Icon n="balloon" s={20} /></Halo><span>曲線フキダシ</span></SubItem>
        </Main>
        <Scroll />
      </Split>
      <Row $h={22} $end><IconBtn aria-label="page"><Icon n="page" s={15} /></IconBtn><IconBtn aria-label="trash"><Icon n="trash" s={16} /></IconBtn></Row>
    </Panel>
    <BrushSizes />
  </Column>
);
const BrushGrid = styled.div` display: grid; grid-template-columns: repeat(3, 1fr); grid-auto-rows: 40px; `;
const BrushCell = styled.button`
  flex-direction: column; justify-content: flex-start; padding-top: 3px; border: 0 solid #6a6b6e; border-width: 0 1px 1px 0; color: ${c.dim}; overflow: hidden;
  & > svg { margin-bottom: -5px; }
`;
const brushes: [string, number][] = [['0.07', 1], ['0.1', 1], ['0.15', 1], ['0.2', 1], ['0.25', 2], ['0.3', 2], ['0.4', 3], ['0.5', 4], ['0.6', 5], ['0.7', 6], ['0.8', 7], ['1', 9], ['1.2', 11], ['1.5', 14], ['1.7', 16], ['2', 19], ['2.5', 24], ['3', 24]];
const BrushSizes = () => (
  <Panel $h={287}>
    <Tabs><TabMenu aria-label="Menu"><Icon n="menu" s={12} /></TabMenu><Tab $on $gap={2}><Nib /><Icon n="dotTree" s={16} />ブラシサイズ</Tab></Tabs>
    <Row $h={20} $pad="0 0 4px 8px"><svg width="46" height="9"><path d="M0 9L46 0v9z" fill="#3f4041" /></svg></Row>
    <Split>
      <Main><BrushGrid>{brushes.map(([t, d]) => <BrushCell key={t}><svg width="26" height="24"><circle cx="13" cy="12" r={d / 2} fill="#57585a" /></svg>{t}</BrushCell>)}</BrushGrid></Main>
      <Scroll f={[2, 108, 112]} />
    </Split>
  </Panel>
);

/* ---------- tool property ---------- */
const Preview = styled.div`
  height: 41px; flex: none; display: grid; border: 1px solid #3f4041; border-left: 0; overflow: hidden; background: linear-gradient(100deg, #c4c4c4, #b3b3b3 45%, #8f9093);
  & > * { grid-area: 1 / 1; }
  & > svg { justify-self: end; }
  & > b { font-weight: 400; font-size: 12px; color: #000; align-self: end; justify-self: center; line-height: 16px; }
  & > span { background: rgba(120, 120, 125, .6); width: 57px; height: 17px; padding-left: 3px; line-height: 15px; }
`;
const Prop = styled.div<{ $h: number; $line?: boolean; $in?: number; $dim?: boolean }>`
  height: ${p => p.$h}px; flex: none; display: flex; align-items: center; justify-content: space-between; gap: 4px;
  margin-left: 12px; padding-left: ${p => p.$in ?? 6}px; white-space: nowrap;
  ${p => p.$line && 'border-bottom: 1px solid #6a6b6e;'} ${p => p.$dim && 'color: #b0b1b4;'}
`;
const Label = styled.label<{ $small?: boolean }>` font-size: ${p => (p.$small ? 11 : 12)}px; `;
const Stacked = styled.span` display: flex; flex-direction: column; line-height: 14px; & > input { margin-left: 20px; } `;
const Range = styled.input`
  appearance: none; width: 49px; height: 9px; background: none; border-bottom: 1px solid #222; border-right: 1px solid #222;
  &::-webkit-slider-thumb { appearance: none; width: 21px; height: 9px; border: 1px solid #333; background: linear-gradient(90deg, #77787b, #aaa); }
`;
const Check = styled.input`
  appearance: none; width: 13px; height: 13px; flex: none; border: 1px solid #4b4c4e; border-radius: 2px; background: #8a8b8f;
`;
const Pair = styled.span<{ $gap?: number }>` display: flex; align-items: center; gap: ${p => p.$gap ?? 0}px; font-size: 12px; `;
const Value = styled(Pair)` font-size: 11px; `;
const Sample = styled.i` width: 38px; height: 9px; border: 1px solid #222; margin-left: 8px; `;
const Tint = styled.button` ${raised} width: 87px; height: 20px; padding: 3px; background: #8c8d91; &::before { content: ''; flex: 1; align-self: stretch; border: 1px solid #68696c; } `;
const Toggle = styled.button`
  width: 10px; height: 10px; border: 1px solid #333; border-radius: 2px; &::before { content: ''; width: 6px; height: 1px; background: #eee; }
`;
const DirGroup = styled.div` ${raised} display: flex; align-items: center; height: 24px; `;
const Pick = ({ id, label, w, v, small }: { id: string; label: string; w: number; v: string; small?: boolean }) => (
  <><Label $small={small} htmlFor={id}>{label}</Label><Drop $w={w}><Select id={id} defaultValue="v"><option value="v">{v}</option></Select><Arrow d="d" w={10} /></Drop></>
);
const PropertyPanel = () => (
  <Panel $h={324}>
    <Tabs><TabMenu aria-label="Menu"><Icon n="menu" s={12} /></TabMenu><Tab $on $gap={2}><Nib /><Icon n="gear" s={9} /><Gap $w={1} />ツールプロパティ[テキスト]</Tab></Tabs>
    <Preview>
      <svg width="88" height="40" fill="#707174" opacity=".45">
        <path d="M2 38L12 0h10l22 38H32l-6-12-14 4-2 8zM16 8l-3 16 11-3z" />
        <path d="M38 24L52 6l24 22-8 6-6-7-12 3-2 6zM54 14l-3 10 8-2z" />
        <path d="M68 22l12-8 10 18-6 2-3-6-7 2 0 3zM79 20l-4 6 5-1z" />
      </svg>
      <b>【 テキスト編集中 】</b>
      <span>テキスト 1</span>
    </Preview>
    <Stage>
      <Main $pad="0 4px 0 0">
        <Prop $h={24} $line><Stacked>行間<Range type="range" aria-label="行間" defaultValue={0} /></Stacked><Value><Num $w={38} aria-label="行間の値" defaultValue="120.0" /><SpinBox /><Gap $w={14} /></Value></Prop>
        <Prop $h={27} $line><Pair>文字方向</Pair>
          <DirGroup><IconBtn $w={27} $h={22} aria-label="横書き"><Icon n="hLines" s={18} /></IconBtn><IconBtn $w={27} $h={23} $on aria-label="縦書き"><Icon n="vLines" s={18} /></IconBtn><IconBtn $w={13} aria-label="More"><Arrow d="d" w={10} /></IconBtn></DirGroup>
        </Prop>
        <Prop $h={23} $line><Pick small id="aa" label="アンチエイリアス" w={58} v="オン" /></Prop>
        <Prop $h={24} $line><Pick id="tcy" label="自動縦中横" w={75} v="2 文字" /></Prop>
        <Prop $h={22} $in={-6}><Pair $gap={3}><Toggle aria-label="閉じる" /><Check type="checkbox" id="edge" /><Gap $w={2} /><Label $small htmlFor="edge">フチ</Label><Sample /></Pair></Prop>
        <Prop $h={24} $line $dim>フチの色<Tint aria-label="フチの色" /></Prop>
        <Prop $h={22} $line><Drop $off><Select aria-label="ルビ設定" defaultValue="v"><option value="v">ルビ設定</option></Select><Arrow d="d" w={10} color="#68696c" /></Drop></Prop>
        <Prop $h={23}><Pick small id="rf" label="ルビフォント" w={82} v="01フロップデザ" /></Prop>
        <Prop $h={27} $line><Stacked>ルビサイズ(%)<Range type="range" aria-label="ルビサイズ" defaultValue={0} /></Stacked><Value><Num $w={24} aria-label="ルビサイズの値" defaultValue="47" /><SpinBox /><Gap $w={14} /></Value></Prop>
        <Prop $h={23} $line><Pick small id="rp" label="ルビ位置" w={88} v="先頭揃え" /></Prop>
        <Prop $h={22}><Drop $hot><Select aria-label="文字一覧" defaultValue="v"><option value="v">文字一覧</option></Select><Arrow d="d" w={10} /></Drop></Prop>
      </Main>
      <Scroll f={[106, 131, 1]} />
    </Stage>
  </Panel>
);

/* ---------- colour set ---------- */
const hues = ('f0b0b8-c0003a f095bf-e6007e c48ec0-920783 8c82bb-1d2088 7fa5db-0068b7 88cdf5-00a0e9 88ccca-009e96 8ac997-009944 cbe08c-8fc31f d8cf82-a09800 d4a878-a05a00 d08a70-940000 c87882-900030 c880a4-900050 a878a0-5f0052 7c78a8-0a0058 7a94bc-003c78 6cacc8-00649b 6ca8a4-006964 78a888-006428 a8bc7c-567d00 a09c60-3c3600 a88c64-3c1c00 a06c54-380000 985c60-380008 986078-380018 80587c-200018 605c84-000018 58749c-00082c 5888a8-002438 4c8480-002420 5c8864-002400 7c8c60-1c2c00 d0c490-a08838').split(' ');
const rgb = (h: string) => [0, 2, 4].map(i => parseInt(h.slice(i, i + 2), 16));
const shade = (row: string, i: number) => {
  const [m, e] = row.split('-').map(rgb);
  const first = m.map(v => 240 + v / 17);
  const [a, b, t] = i < 8 ? [first, m, i / 8] : [m, e, (i - 8) / 7];
  return `rgb(${a.map((v, k) => Math.round(v + (b[k] - v) * t)).join(',')})`;
};
const Swatches = styled.div`
  flex: 1; min-height: 0; display: flex; flex-direction: column; justify-content: flex-end; overflow: hidden; padding-left: 1px; background: #808184;
`;
const SwatchRow = styled.div`
  height: 9px; flex: none; display: grid; grid-template-columns: repeat(16, 1fr); gap: 1px; padding: 0 1px 1px 0;
  &:last-child { height: 4px; }
`;
const Cell = styled.i``;
const Recent = styled.button` width: 9px; height: 9px; border: 1px solid #222; margin-right: 23px; `;
const ColorSet = () => (
  <Panel $grow>
    <Split>
      <Swatches role="img" aria-label="カラーセット">
        {hues.map(h => <SwatchRow key={h}>{Array.from({ length: 16 }, (_, i) => <Cell key={i} style={{ background: shade(h, i) }} />)}</SwatchRow>)}
      </Swatches>
      <Gap />
      <Scroll f={[250, 215, 105]} />
    </Split>
    <Row $h={21} $pad="0 3px 0 1px">
      {['#900', '#090', '#00c'].map(k => <Recent key={k} aria-label={k} style={{ background: k }} />)}
      <Row $end $grow>{['swatchAdd', 'dropAdd', 'trashDim'].map(n => <IconBtn key={n} aria-label={n}><Icon n={n} s={15} /></IconBtn>)}</Row>
    </Row>
  </Panel>
);

/* ---------- character list window ---------- */
const Popup = styled.section`
  position: absolute; right: 4px; top: 392px; width: 448px; height: 300px; display: flex; flex-direction: column;
  background: ${c.panel}; border: 5px solid #58595a; border-top-color: #626364; outline: 1px solid #3b3c3d; outline-offset: -1px;
  box-shadow: 2px 2px 4px rgba(0, 0, 0, .5);
`;
const CharGrid = styled.div`
  flex: 1; display: grid; grid-template-columns: repeat(16, 1fr); grid-auto-rows: 26px; background: #fff; color: #000; align-content: start; overflow: hidden;
  border-left: 1px solid #333; border-top: 1px solid #333;
`;
const Char = styled.button<{ $kind?: string }>`
  min-width: 0; font: 500 19px/26px ${compact}; font-feature-settings: normal;
  ${p => p.$kind === 'mark' && `font: 700 20px/24px ${serif};`}
  ${p => p.$kind === 'slant' && `font: italic 700 20px/24px ${serif};`}
  ${p => p.$kind === 'triple' && `font: italic 700 18px/24px ${serif};`}
  ${p => p.$kind === 'bold' && `font: 700 21px/24px ${compact};`}
  ${p => p.$kind === 'narrow' && `font: 700 12px/24px ${compact};`}
  &::before { ${p => p.$kind === 'sq' && "content: ''; width: 7px; height: 7px; background: #000;"} }
`;
const star = 'M10 1.500l2.700 5.500 6.300 1-4.500 4.300 1 6.200-5.500-3-5.500 3 1-6.200L1 8l6.300-1z';
const heart = 'M10 19C7 14 0 11 0 6c0-6 8-7 10-2 2-5 10-4 10 2 0 5-7 8-10 13z';
const sun = Array.from({ length: 32 }, (_, i) => { const r = i % 2 ? 6.500 : 9.500, a = (i * Math.PI) / 16; return `${(10 + r * Math.cos(a)).toFixed(1)},${(10 + r * Math.sin(a)).toFixed(1)}`; }).join(' ');
const k = { stroke: '#000', fill: 'none' };
const glyphs: Record<string, React.ReactNode> = {
  daku: <path d="M15 2l1 2M18 1l1 2" {...k} />,
  wavV: <path d="M11 0c-5 4 1 5-1 8s2 4 0 7 1 3 1 5" {...k} strokeWidth="1.800" />,
  wavH: <path d="M0 11c3-4 4-3 6-1s3 2 5 0 3-2 5 0 2 1 4-1" {...k} strokeWidth="2" />,
  v3: <path d="M10 1v18" {...k} strokeWidth="2" />, h3: <path d="M0 10h20" {...k} strokeWidth="2" />,
  v1: <path d="M10 1v18" {...k} strokeWidth=".6" />, h1: <path d="M0 10h20" {...k} strokeWidth=".6" />,
  vv3: <path d="M7 1v18M13 1v18" {...k} strokeWidth="2.500" />, vv1: <path d="M8 6v8M12 6v8" {...k} strokeWidth="1" />,
  vv2: <path d="M8 6v8M12 6v8" {...k} strokeWidth="1.700" />,
  s1: <path d="M1 18L19 1" {...k} strokeWidth="1.200" />, s3: <path d="M1 18L19 1" {...k} strokeWidth="2.500" />,
  z1: <path d="M7 3l6 4-4 3 4 3-6 4 3-4" {...k} strokeWidth="1.500" />,
  z2: <path d="M6 4l6 4-4 2 5 3-7 4 3-4M14 4l1 2M17 3l1 2" {...k} strokeWidth="1.500" />,
  t1: <path d="M13 2L8 18" {...k} strokeWidth="1.800" />, t2: <path d="M7 2l6 16" {...k} strokeWidth="1.500" />,
  t3: <path d="M11 2L6 18M14 13l1 2M17 12l1 2" {...k} strokeWidth="1.500" />,
  onsen: <path d="M4 11c-6 3-3 7 6 7s12-4 6-7M7 4c-2 3 1 5-1 9M11 2c-2 4 1 7-1 12M15 4c-2 3 1 5-1 9" {...k} strokeWidth="1.500" />,
  ball: <><circle cx="10" cy="10" r="9" {...k} strokeWidth=".8" /><path d="M5 2c4 4 4 12 0 16M15 2c-4 4-4 12 0 16" {...k} strokeWidth=".8" /><path d="M8 5l-2 1M9 10H6M8 14l-2-1M12 5l2 1M11 10h3M12 14l2-1" {...k} strokeWidth=".7" /></>,
  heartO: <path d={heart} {...k} strokeWidth="1.700" />, heartT: <path d={heart} {...k} strokeWidth=".6" />, heartF: <path d={heart} fill="#000" />,
  dia: <path d="M10 2l8 8-8 8-8-8z" {...k} />,
  club: <path d="M9 13c-3 4-8 2-8-2s3-5 6-3C3 0 17 0 13 8c3-2 6-1 6 3s-5 6-8 2v4H9zM7 18h6" {...k} />,
  spade: <path d="M10 1c3 5 8 7 8 11 0 4-5 5-7 1v4H9v-4c-2 4-7 3-7-1 0-4 5-6 8-11zM7 18h6" {...k} />,
  starF: <path d={star} fill="#000" stroke="#000" strokeLinejoin="round" strokeWidth="2.500" />,
  starT: <path d={star} {...k} strokeWidth=".9" strokeLinejoin="round" />, starO: <path d={star} {...k} strokeWidth="1.300" strokeLinejoin="round" />,
  sunF: <polygon points={sun} fill="#000" />, sunT: <polygon points={sun} {...k} strokeWidth=".5" />,
  coil: <path d="M10 10c1-1 2 1 0 2-3 1-4-4 0-5 5-1 7 6 1 8-7 2-10-8-2-11 8-2 13 9 4 13C5 19 0 13 2 7" {...k} strokeWidth="1.200" />,
  coil2: <path d="M10 10c-1-1-2 1 0 2 3 1 4-4 0-5-5-1-7 6-1 8 7 2 10-8 2-11C3 2-2 13 7 17c8 2 13-4 11-10" {...k} strokeWidth="1.200" />,
  handR: <path d="M1 5h5l3 1h10v2h-7 1v2h-2v2h-1v2H6l-3-1H1zM7 9h5M8 11h3" {...k} strokeWidth=".8" />,
  handL: <path d="M19 5h-5l-3 1H1v2h7-1v2h2v2h1v2h4l3-1h2zM13 9H8M12 11H9" {...k} strokeWidth=".8" />,
  target: <><circle cx="10" cy="10" r="9" {...k} strokeWidth=".9" /><circle cx="10" cy="10" r="6" {...k} strokeWidth=".9" /><circle cx="10" cy="10" r="3" {...k} strokeWidth=".9" /></>,
  ioriten: <path d="M1 7c1-4 3-4 4-1 1-4 4-4 5-1l4 13" {...k} strokeWidth="1.200" />,
  soccer: <><circle cx="10" cy="10" r="8.500" fill="#fff" stroke="#000" /><path d="M7 8l3-2 3 2-1 4H8zM3 5l4-3 1 3-4 3zM13 3l5 3-1 4-3-2zM1.500 11l3 1 1 4-2-1zM8 15l5-1 1 3-5 1z" fill="#000" /></>,
  tick: <path d="M5 11c2 1 2 3 3 6 1-6 3-10 6-14" {...k} strokeWidth="1.200" />,
  face: <g transform="scale(.55)">{faceArt}</g>,
  moon: <path d="M5 2c8-2 14 3 14 8s-6 10-14 8c4-1 6-3 6-5l-3-1 2-2-2-1 3-2C11 5 9 3 5 2zM13 7l3 1M12 13l3-1" {...k} strokeWidth=".8" />,
  cutH: <><path d="M19 5L6 12M19 14L6 7" {...k} strokeWidth="1.300" /><circle cx="4" cy="6" r="2.300" {...k} /><circle cx="4" cy="13.500" r="2.300" {...k} /></>,
  cutV: <><path d="M6 1l6 13M14 1L8 14" {...k} strokeWidth="1.300" /><circle cx="6" cy="16" r="2.300" {...k} /><circle cx="14" cy="16" r="2.300" {...k} /></>,
  plane: <><rect x="1" y="1" width="18" height="18" rx="2" {...k} strokeWidth="1.400" /><path d="M16 3l1 1-4 5 2 6-2 1-3-5-3 3v2l-1 1-1-3-3-1 1-1h2l3-3-5-3 1-2 6 2z" fill="#000" /></>,
  torii: <path d="M1 3h18M3 8h14M5 3v16M15 3v16" {...k} strokeWidth="1.300" />,
};
const Fraction = ({ t }: { t: string }) => {
  const [a, b] = t.split('/');
  return (
    <svg width="20" height="20" viewBox="0 0 20 20" fontFamily="Liberation Sans, sans-serif" fontWeight="700" fontSize="12">
      <text x="1" y="9">{a}</text><text x="12" y="19">{b}</text><path d="M1 19L18 1" {...k} strokeWidth="1.200" />
    </svg>
  );
};
type G = [string, string];
const sq = (n: number): G[] => Array.from({ length: n }, () => ['sq', ''] as G);
const g = (s: string): G[] => s.split(' ').map(n => ['g', n] as G);
const chars: G[] = [
  ...sq(2), ...g('daku wavV wavH v3 h3 v1 h1 vv3 vv1 vv2 s1 s3'), ['slant', '?'], ['slant', '!'],
  ['mark', '!!'], ['slant', '!!'], ['mark', '!?'], ['slant', '!?'], ['mark', '?!'], ['slant', '?!'], ['mark', '??'], ['slant', '??'], ['mark', '!!!'], ['triple', '!!!'], ...g('z1 z2 t1 t2 t3 t2'),
  ...g('onsen ball heartO heartT heartF dia club spade starF starT starO sunF sunT coil coil2 handR'),
  ...g('handL target'), ['bold', '$'], ...g('ioriten'), ...['1/2', '1/3', '1/4', '2/3', '3/4'].map(f => ['frac', f] as G), ...g('soccer tick face moon cutH cutV plane'),
  ...g('torii'), ['', '卍'], ['narrow', 'ISO'], ...sq(29),
  ...Array.from('啞逢芦飴溢茨鰯淫迂噓欝厩厩噂餌益焰襖鷗迦牙恢拐晦慨概喝葛鞄嚙澗翰舘翫徽祇𠮷汲笈俠卿敎槗槗槁鄕饗僅').map(t => ['', t] as G),
];
const glyph = ([kind, t]: G) => (kind === 'g' ? <svg width="20" height="20" viewBox="0 0 20 20">{glyphs[t]}</svg> : kind === 'frac' ? <Fraction t={t} /> : t);
const CharacterList = () => (
  <Popup aria-label="文字一覧">
    <Row $h={24} $gap={5} $pad="1px 2px 0 1px">
      <Drop><Select aria-label="文字領域" defaultValue="v"><option value="v">私用領域</option></Select><Arrow d="d" w={10} /></Drop>
      <Drop><Select aria-label="フォント" defaultValue="v"><option value="v">漫画+-IOTFアンチックStdB</option></Select><Arrow d="d" w={10} /></Drop>
    </Row>
    <Row $h={243} $pad="0 2px 0 1px">
      <Stage>
        <CharGrid>
          {chars.map((ch, i) => <Char key={i} $kind={ch[0]} aria-label={ch[0] === 'g' || ch[0] === 'sq' ? `U+${(0xe580 + i).toString(16)}` : undefined}>{glyph(ch)}</Char>)}
        </CharGrid>
        <Scroll f={[186, 11, 24]} grip={false} />
      </Stage>
    </Row>
    <Row $pad="0 2px 0 3px" $h={23} $between>
      <span>Unicode: 0xE580 - 0xE60F</span><Btn $w={79}>一文字消去</Btn>
    </Row>
  </Popup>
);

const menus = ['ファイル(F)', '編集(E)', 'ページ管理(P)', 'アニメーション(A)', 'レイヤー(L)', '選択範囲(S)', '表示(V)', 'フィルター(I)', 'ウィンドウ(W)', 'ヘルプ(H)'];
const WinBtn = ({ d, label }: { d: string; label: string }) => (
  <button aria-label={label}><svg width="16" height="16" viewBox="0 0 16 16" fill="none"><circle cx="8" cy="8" r="7.500" fill="#1c1c1c" stroke="#555" /><path d={d} stroke="#ddd" strokeWidth="1.800" /></svg></button>
);

export default function App() {
  return (
    <>
      <Global />
      <Win>
        <TitleBar>
          {'新規キャンバス*  (400  x  600px  72dpi  100.0%)   -  CLIP STUDIO PAINT EX'}
          <WinButtons>
            <WinBtn label="最小化" d="M3 11h10" /><WinBtn label="最大化" d="M4 4.500h8v7H4z" /><WinBtn label="閉じる" d="M4.500 4.500l7 7M11.500 4.500l-7 7" />
          </WinButtons>
        </TitleBar>
        <MenuBar>{menus.map(m => <button key={m}>{m}</button>)}</MenuBar>
        <Body>
          <Column $w={215}>
            <Strip $end><Icon n="left2" s={13} /></Strip>
            <LayerProperty />
            <Layers />
          </Column>
          <CanvasArea />
          <ToolColumn />
          <Column $w={178}>
            <Strip><Icon n="right2" s={13} /></Strip>
            <PropertyPanel />
            <ColorSet />
          </Column>
          <Edge><Strip><Icon n="left2" s={12} /></Strip></Edge>
        </Body>
        <CharacterList />
      </Win>
    </>
  );
}
